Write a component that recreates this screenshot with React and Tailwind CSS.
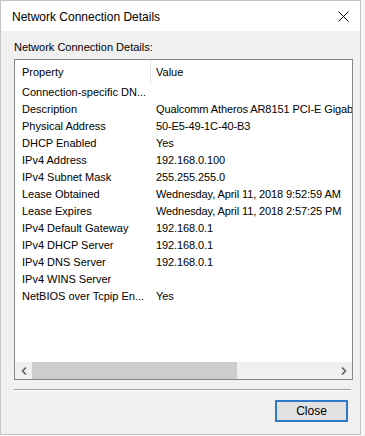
const rows = [
  ['Connection-specific DN...', ''],
  ['Description', 'Qualcomm Atheros AR8151 PCI-E Gigabit'],
  ['Physical Address', '50-E5-49-1C-40-B3'],
  ['DHCP Enabled', 'Yes'],
  ['IPv4 Address', '192.168.0.100'],
  ['IPv4 Subnet Mask', '255.255.255.0'],
  ['Lease Obtained', 'Wednesday, April 11, 2018 9:52:59 AM'],
  ['Lease Expires', 'Wednesday, April 11, 2018 2:57:25 PM'],
  ['IPv4 Default Gateway', '192.168.0.1'],
  ['IPv4 DHCP Server', '192.168.0.1'],
  ['IPv4 DNS Server', '192.168.0.1'],
  ['IPv4 WINS Server', ''],
  ['NetBIOS over Tcpip En...', 'Yes'],
]

export default function App() {
  return (
    <div
      className="w-[365px] h-[436px] bg-[#f6f6f6] text-[11px] text-black"
      style={{ fontFamily: '"Liberation Sans", Arial, sans-serif' }}
    >
      <div className="w-[361px] h-[435px] border border-[#c4c4c4] flex flex-col bg-[#f0f0f0]">
        {/* Title bar */}
        <div className="h-[30px] bg-white flex items-center justify-between pl-[11px] pr-[11px]">
          <span className="text-[12px] leading-[14px] pt-[2px]">Network Connection Details</span>
          <svg width="11" height="11" viewBox="0 0 11 11" className="mt-[1px]">
            <path d="M0.5 0.5 L10.5 10.5 M10.5 0.5 L0.5 10.5" stroke="#000" strokeWidth="1" />
          </svg>
        </div>

        {/* Body */}
        <div className="flex-1 flex flex-col px-[13px]">
          <div className="pt-[10px] h-[28px] leading-[13px]">Network Connection Details:</div>

          {/* List view */}
          <div className="w-[339px] h-[321px] border border-[#828790] bg-white flex flex-col overflow-hidden">
            <div className="h-[24px] flex items-center shrink-0">
              <div className="w-[136px] pl-[7px] leading-[13px] border-r border-[#e5e5e5] h-full flex items-center">
                Property
              </div>
              <div className="pl-[5px] leading-[13px]">Value</div>
            </div>
            <div className="flex-1">
              {rows.map(([k, v]) => (
                <div key={k} className="h-[17px] flex items-center whitespace-nowrap">
                  <div className="w-[136px] pl-[7px] shrink-0">{k}</div>
                  <div className="pl-[5px] tracking-[-0.1px]">{v}</div>
                </div>
              ))}
            </div>
            {/* Horizontal scrollbar */}
            <div className="h-[17px] bg-[#f0f0f0] flex items-center shrink-0">
              <div className="w-[17px] h-full flex items-center justify-center">
                <svg width="6" height="8" viewBox="0 0 6 8">
                  <path d="M5 0.5 L1.5 4 L5 7.5" stroke="#606060" strokeWidth="1.6" fill="none" />
                </svg>
              </div>
              <div className="w-[205px] h-full bg-[#cdcdcd]" />
              <div className="flex-1" />
              <div className="w-[17px] h-full flex items-center justify-center">
                <svg width="6" height="8" viewBox="0 0 6 8">
                  <path d="M1 0.5 L4.5 4 L1 7.5" stroke="#606060" strokeWidth="1.6" fill="none" />
                </svg>
              </div>
            </div>
          </div>

          {/* Separator */}
          <div className="mt-[9px] w-[337px] border-t border-[#a0a0a0] border-b border-b-white" />

          {/* Buttons */}
          <div className="flex justify-end pt-[9px]">
            <button className="w-[73px] h-[22px] border-2 border-[#2f78c6] bg-[#e1e1e1] text-[12px] leading-[14px] mr-[-1px]">
              Close
            </button>
          </div>
        </div>
      </div>
    </div>
  )
}
